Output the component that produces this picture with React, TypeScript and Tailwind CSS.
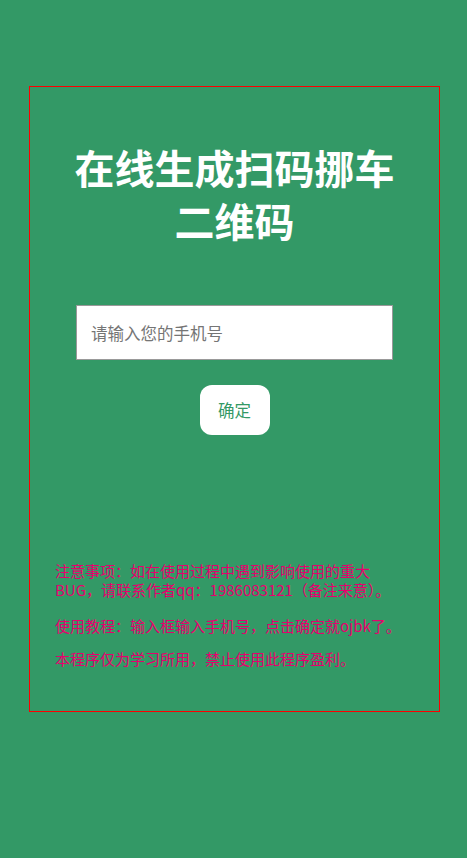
import React, { useState } from "react";

const notes = [
  "注意事项：如在使用过程中遇到影响使用的重大",
  "BUG，请联系作者qq：1986083121（备注来意）。",
];

const App: React.FC = () => {
  const [phone, setPhone] = useState("");

  return (
    <div className="min-h-[858px] w-full bg-[#339966] pt-[86px] font-['Noto_Sans_CJK_SC','Noto_Sans',sans-serif]">
      {/* Card */}
      <div className="ml-[29px] flex h-[626px] w-[411px] flex-col items-center border border-[#ff0000]">
        <h1 className="mt-[54px] w-[340px] text-center text-[40px] font-bold leading-[53px] text-white">
          在线生成扫码挪车
          <br />
          二维码
        </h1>

        <input
          value={phone}
          onChange={(e) => setPhone(e.target.value)}
          placeholder="请输入您的手机号"
          className="mt-[58px] h-[55px] w-[317px] border border-[#999999] bg-white px-[14px] text-[16.5px] text-[#333] outline-none placeholder:text-[#757575]"
        />

        <button className="mt-[25px] h-[50px] w-[70px] rounded-[12px] bg-white text-[16.5px] text-[#339966]">
          确定
        </button>

        {/* Notes */}
        <div className="mt-[126px] w-full pl-[25px] text-[15px] leading-[19px] text-[#e6006e]">
          <p>
            {notes[0]}
            <br />
            {notes[1]}
          </p>
          <p className="mt-[17px]">使用教程：输入框输入手机号，点击确定就ojbk了。</p>
          <p className="mt-[14px]">本程序仅为学习所用，禁止使用此程序盈利。</p>
        </div>
      </div>
    </div>
  );
};

export default App;
